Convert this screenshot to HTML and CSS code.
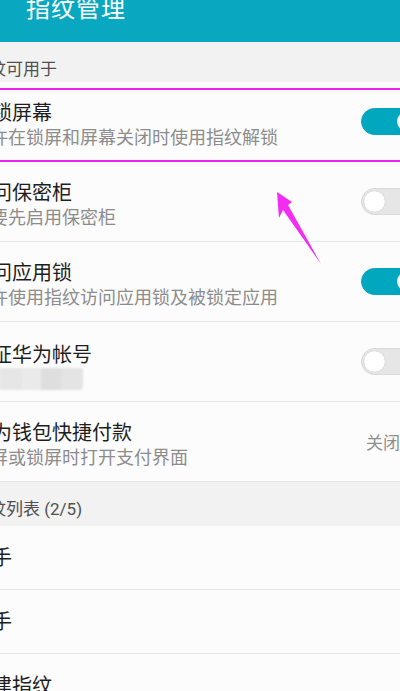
FILE: index.html
```html
<!DOCTYPE html>
<html lang="zh-CN">

<head>
    <meta charset="UTF-8">
    <meta name="viewport" content="width=device-width, initial-scale=1.0">
    <title>指纹管理</title>
    <link rel="stylesheet" href="styles.css">
</head>

<body>
    <div class="screen">
        <header class="appbar">
            <h1 class="appbar-title">指纹管理</h1>
        </header>

        <div class="section-label">指纹可用于</div>

        <div class="row">
            <div class="row-text">
                <div class="row-title">解锁屏幕</div>
                <div class="row-sub">允许在锁屏和屏幕关闭时使用指纹解锁</div>
            </div>
            <span class="switch on"></span>
            <!-- annotation box -->
            <span class="mark-box"></span>
        </div>

        <div class="row">
            <div class="row-text">
                <div class="row-title">访问保密柜</div>
                <div class="row-sub">需要先启用保密柜</div>
            </div>
            <span class="switch"></span>
        </div>

        <div class="row">
            <div class="row-text">
                <div class="row-title">访问应用锁</div>
                <div class="row-sub">允许使用指纹访问应用锁及被锁定应用</div>
            </div>
            <span class="switch on"></span>
        </div>

        <div class="row">
            <div class="row-text">
                <div class="row-title">验证华为帐号</div>
                <div class="masked"></div>
            </div>
            <span class="switch"></span>
        </div>

        <div class="row">
            <div class="row-text">
                <div class="row-title">华为钱包快捷付款</div>
                <div class="row-sub">熄屏或锁屏时打开支付界面</div>
            </div>
            <span class="row-value">关闭</span>
        </div>

        <div class="section-label section-label-tall">指纹列表 (2/5)</div>

        <div class="row row-single">
            <div class="row-title">右手</div>
        </div>
        <div class="row row-single">
            <div class="row-title">左手</div>
        </div>
        <div class="row row-single">
            <div class="row-title">新建指纹</div>
        </div>

        <!-- annotation arrow -->
        <svg class="arrow" width="48" height="76" viewBox="0 0 48 76">
            <polygon points="1,2 16,12 12,15 45,74 7,20 3,28" fill="#f22cf2" />
        </svg>
    </div>
</body>

</html>
```

FILE: styles.css
```css
body {
    margin: 0;
    overflow: hidden;
    background-color: #fcfcfc;
    font-family: Roboto, "Noto Sans CJK SC", sans-serif;
}

.screen {
    position: relative;
    width: 470px;
    margin-left: -28px;
}

.appbar {
    height: 42px;
    background-color: #0aa8c0;
    padding-left: 54px;
    overflow: hidden;
}

.appbar-title {
    margin: -3px 0 0;
    font-size: 24px;
    line-height: 24px;
    font-weight: normal;
    letter-spacing: 1px;
    color: #fff;
}

.section-label {
    font-size: 17px;
    line-height: 21px;
    color: #505050;
    background-color: #f2f2f2;
    padding: 17px 0 2px;
}

.section-label-tall {
    padding-bottom: 6px;
}

.row {
    position: relative;
    display: flex;
    align-items: center;
    box-sizing: border-box;
    height: 80px;
    padding-right: 21px;
    background-color: #fcfcfc;
    border-bottom: 1px solid #e6e6e6;
}

.row-single {
    height: 64px;
}

.row-text {
    flex: 1;
    padding-top: 9px;
    white-space: nowrap;
}

.row-single .row-title {
    flex: 1;
}

.row-title {
    font-size: 20px;
    line-height: 24px;
    color: #1e1e1e;
}

.row-sub {
    font-size: 18px;
    line-height: 26px;
    color: #8c8c8c;
}

.row-value {
    font-size: 17px;
    color: #8e8e8e;
    margin-right: 21px;
}

.masked {
    width: 111px;
    height: 22px;
    margin-top: 1px;
    border-radius: 3px;
    background: linear-gradient(90deg, #ececec 0 25%, #e6e6e6 25% 45%, #eaeaea 45% 62%, #dedede 62% 80%, #e4e4e4 80% 100%);
    filter: blur(1px);
}

.switch {
    position: relative;
    flex: none;
    box-sizing: border-box;
    width: 60px;
    height: 27px;
    border-radius: 14px;
    background-color: #e6e6e6;
    border: 1px solid #d9d9d9;
}

.switch::after {
    content: "";
    position: absolute;
    top: 2px;
    left: 2px;
    width: 21px;
    height: 21px;
    border-radius: 50%;
    background-color: #fff;
    box-shadow: 0 0 1px rgba(0, 0, 0, 0.25);
}

.switch.on {
    background-color: #00a7be;
    border-color: #00a7be;
}

.switch.on::after {
    left: auto;
    right: 2px;
}

.mark-box {
    position: absolute;
    top: 6px;
    bottom: -1px;
    left: -10px;
    right: -10px;
    border: 2px solid #f21ff2;
    z-index: 2;
}

.arrow {
    position: absolute;
    left: 304px;
    top: 190px;
    z-index: 3;
}
```
